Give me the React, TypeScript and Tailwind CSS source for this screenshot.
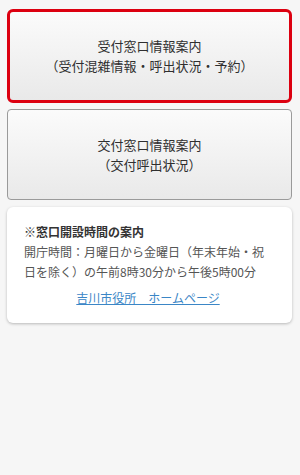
const font = { fontFamily: '"Noto Sans CJK JP", "Noto Sans", sans-serif' };

const MenuButton = ({
  lines,
  active,
}: {
  lines: string[];
  active?: boolean;
}) => {
  return (
    <div
      className={
        active
          ? "flex flex-col items-center justify-center h-[94px] rounded-[6px] border-[3px] border-[#dc0010] bg-gradient-to-b from-[#fbfbfb] to-[#e9e9e9] text-[13px] leading-[20px] text-[#2f2f2f]"
          : "flex flex-col items-center justify-center h-[91px] rounded-[4px] border border-[#9a9a9a] bg-gradient-to-b from-[#fbfbfb] to-[#e9e9e9] text-[13px] leading-[20px] text-[#2f2f2f]"
      }
    >
      {lines.map((l) => (
        <div key={l}>{l}</div>
      ))}
    </div>
  );
};

export default function App() {
  return (
    <div
      className="w-[300px] h-[475px] bg-[#f6f6f6] flex flex-col gap-[6px] pl-[7px] pt-[9px] pr-[8px]"
      style={font}
    >
      <MenuButton
        active
        lines={["受付窓口情報案内", "（受付混雑情報・呼出状況・予約）"]}
      />
      <MenuButton lines={["交付窓口情報案内", "（交付呼出状況）"]} />
      <div className="mt-[1px] bg-white rounded-[6px] shadow-[0_1px_3px_rgba(0,0,0,0.25)] pl-[17px] pr-[20px] pt-[15px] pb-[15px]">
        <div className="text-[12px] leading-[20px] font-bold text-[#333]">
          ※窓口開設時間の案内
        </div>
        <div className="text-[12px] leading-[20px] text-[#555]">
          開庁時間：月曜日から金曜日（年末年始・祝日を除く）の午前8時30分から午後5時00分
        </div>
        <div className="mt-[6px] flex justify-center">
          <a className="text-[12px] leading-[20px] text-[#3b86c6] underline">
            吉川市役所　ホームページ
          </a>
        </div>
      </div>
    </div>
  );
}
